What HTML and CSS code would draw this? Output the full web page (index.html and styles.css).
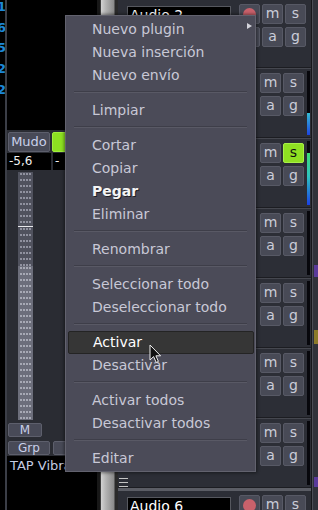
FILE: index.html
```html
<!DOCTYPE html>
<html lang="es">

<head>
    <meta charset="UTF-8">
    <title>Mezclador</title>
    <link rel="stylesheet" href="styles.css">
</head>

<body>
    <div class="screen">
        <div class="ruler">
            <div class="tick"><span>11</span></div>
            <div class="tick"><span>16</span></div>
            <div class="tick"><span>25</span></div>
            <div class="tick"><span>32</span></div>
            <div class="tick"><span>42</span></div>
        </div>

        <div class="strip">
            <div class="strip_top"></div>
            <div class="strip_row">
                <div class="sbtn sbtn_mute">Mudo</div>
                <div class="sbtn sbtn_solo">S</div>
            </div>
            <div class="strip_vals">
                <div class="val">-5,6</div>
                <div class="val">-</div>
            </div>
            <div class="fader_box">
                <div class="fader">
                    <div class="fader_part fader_up"><div class="dots"></div></div>
                    <div class="fader_mark"></div>
                    <div class="fader_part fader_mid"><div class="dots"></div></div>
                    <div class="fader_part fader_low"><div class="dots dots_light"></div></div>
                </div>
            </div>
            <div class="strip_row strip_row_m">
                <div class="sbtn sbtn_small sbtn_m">M</div>
            </div>
            <div class="strip_row strip_row_grp">
                <div class="sbtn sbtn_small sbtn_mute">Grp</div>
                <div class="sbtn sbtn_small sbtn_p">P</div>
            </div>
            <div class="plugins">TAP Vibrato</div>
        </div>

        <div class="split"></div>

        <div class="tracks">
            <div class="track track_first">
                <div class="track_main track_main_rec">
                    <div class="track_head">
                        <div class="name">Audio 2</div>
                        <div class="btns btns_rec">
                            <div class="btn rec"><span class="dot"></span></div>
                            <div class="btn">m</div>
                            <div class="btn">s</div>
                            <div class="btn">P</div>
                            <div class="btn">a</div>
                            <div class="btn">g</div>
                        </div>
                    </div>
                    <div class="handle"></div>
                </div>
            </div>

            <div class="track">
                <div class="track_main">
                    <div class="track_head">
                        <div class="btns">
                            <div class="btn">m</div>
                            <div class="btn">s</div>
                            <div class="btn">a</div>
                            <div class="btn">g</div>
                        </div>
                    </div>
                    <div class="handle"></div>
                </div>
                <div class="meter"><div class="meter_fill meter_blue" style="height:22px"></div></div>
            </div>

            <div class="track">
                <div class="track_main">
                    <div class="track_head">
                        <div class="btns">
                            <div class="btn">m</div>
                            <div class="btn btn_on">s</div>
                            <div class="btn">a</div>
                            <div class="btn">g</div>
                        </div>
                    </div>
                    <div class="handle"></div>
                </div>
                <div class="meter"><div class="meter_fill meter_green" style="height:52px"></div></div>
            </div>

            <div class="track">
                <div class="track_main">
                    <div class="track_head">
                        <div class="btns">
                            <div class="btn">m</div>
                            <div class="btn">s</div>
                            <div class="btn">a</div>
                            <div class="btn">g</div>
                        </div>
                    </div>
                    <div class="handle"></div>
                </div>
                <div class="meter"></div>
            </div>

            <div class="track">
                <div class="track_main">
                    <div class="track_head">
                        <div class="btns">
                            <div class="btn">m</div>
                            <div class="btn">s</div>
                            <div class="btn">a</div>
                            <div class="btn">g</div>
                        </div>
                    </div>
                    <div class="handle"></div>
                </div>
                <div class="meter"></div>
            </div>

            <div class="track">
                <div class="track_main">
                    <div class="track_head">
                        <div class="btns">
                            <div class="btn">m</div>
                            <div class="btn">s</div>
                            <div class="btn">a</div>
                            <div class="btn">g</div>
                        </div>
                    </div>
                    <div class="handle"></div>
                </div>
                <div class="meter"></div>
            </div>

            <div class="track">
                <div class="track_main">
                    <div class="track_head">
                        <div class="btns">
                            <div class="btn">m</div>
                            <div class="btn">s</div>
                            <div class="btn">a</div>
                            <div class="btn">g</div>
                        </div>
                    </div>
                    <div class="handle"></div>
                </div>
                <div class="meter"></div>
            </div>

            <div class="track track_last">
                <div class="track_main track_main_rec">
                    <div class="track_head">
                        <div class="name">Audio 6</div>
                        <div class="btns btns_rec">
                            <div class="btn rec"><span class="dot"></span></div>
                            <div class="btn">m</div>
                            <div class="btn">s</div>
                        </div>
                    </div>
                </div>
            </div>
        </div>

        <div class="edge">
            <div class="mark mark_purple"></div>
            <div class="mark mark_yellow"></div>
            <div class="mark mark_purple2"></div>
        </div>
    </div>

    <!-- menú contextual -->
    <div class="menu">
        <div class="item item_sub">Nuevo plugin<span class="arrow"></span></div>
        <div class="item">Nueva inserción</div>
        <div class="item">Nuevo envío</div>
        <div class="sep"></div>
        <div class="item">Limpiar</div>
        <div class="sep"></div>
        <div class="item">Cortar</div>
        <div class="item">Copiar</div>
        <div class="item item_bold">Pegar</div>
        <div class="item">Eliminar</div>
        <div class="sep"></div>
        <div class="item">Renombrar</div>
        <div class="sep"></div>
        <div class="item">Seleccionar todo</div>
        <div class="item">Deseleccionar todo</div>
        <div class="sep"></div>
        <div class="item item_on">Activar</div>
        <div class="item">Desactivar</div>
        <div class="sep"></div>
        <div class="item">Activar todos</div>
        <div class="item">Desactivar todos</div>
        <div class="sep"></div>
        <div class="item">Editar</div>
    </div>

    <svg class="cursor" width="13" height="20" viewBox="0 0 13 20">
        <path d="M1 1 L1 16 L4.6 12.6 L7.2 18.4 L9.4 17.4 L6.9 11.8 L11.6 11.8 Z" fill="#111" stroke="#eee" stroke-width="1" stroke-linejoin="round"/>
    </svg>
</body>

</html>
```

FILE: styles.css
```css
body {
    margin: 0;
    width: 318px;
    height: 510px;
    overflow: hidden;
    position: relative;
    background: #000;
    font-family: "DejaVu Sans", "Noto Sans", sans-serif;
}

.screen {
    display: flex;
    height: 510px;
}

/* regla de la izquierda */
.ruler {
    width: 5px;
    flex: none;
    overflow: hidden;
    background: #000;
    border-right: 2px solid #3b3e47;
}

.tick {
    display: flex;
    justify-content: flex-end;
    height: 20.7px;
    line-height: 20.7px;
    margin-right: -1px;
    font-size: 13px;
    font-weight: bold;
    color: #1c88d8;
}

.tick:first-child {
    margin-top: -3px;
}

/* tira del mezclador */
.strip {
    width: 90px;
    flex: none;
    display: flex;
    flex-direction: column;
    background: #2a2c33;
}

.strip_top {
    height: 130px;
    background: #000;
}

.strip_row {
    display: flex;
    gap: 2px;
    padding: 2px 0 0 1px;
}

.sbtn {
    height: 20px;
    box-sizing: border-box;
    background: #484a57;
    border: 1px solid #5d5f6c;
    border-radius: 2px;
    color: #c9d0ea;
    font-size: 13px;
    line-height: 18px;
    text-align: center;
}

.sbtn_mute {
    width: 42px;
}

.sbtn_solo {
    width: 40px;
    background: #8de021;
    border-color: #a2ee3e;
    color: #111;
}

.sbtn_small {
    height: 14px;
    font-size: 12px;
    line-height: 12px;
}

.sbtn_m {
    width: 34px;
}

.sbtn_p {
    width: 40px;
    margin-left: 1px;
}

.strip_row_grp {
    padding-top: 4px;
}

.strip_vals {
    display: flex;
    gap: 2px;
    height: 17px;
    margin-top: 1px;
}

.val {
    width: 44px;
    box-sizing: border-box;
    padding-left: 2px;
    background: #000;
    color: #f2f2f2;
    font-size: 12px;
    line-height: 17px;
}

.fader_box {
    height: 251px;
    box-sizing: border-box;
    padding: 2px 0 1px 11px;
}

.fader {
    width: 15px;
    height: 100%;
    display: flex;
    flex-direction: column;
}

.fader_part {
    display: flex;
    justify-content: center;
}

.fader_up {
    height: 54px;
    background: #50525e;
}

.fader_mark {
    height: 1px;
    background: #e8e8ec;
}

.fader_mid {
    height: 39px;
    background: #50525e;
}

.fader_low {
    flex: 1;
    background: #6c6e7b;
}

.dots {
    width: 11px;
    background-image: radial-gradient(circle at 1px 2px, #9294a2 0.7px, transparent 0.9px);
    background-size: 3px 6px;
}

.dots_light {
    background-image: radial-gradient(circle at 1px 2px, #a9abb7 0.7px, transparent 0.9px);
}

.plugins {
    flex: 1;
    margin-top: 1px;
    padding: 2px 0 0 3px;
    background: #000;
    color: #c3cbe0;
    font-size: 13px;
    line-height: 16px;
    white-space: nowrap;
    overflow: hidden;
}

/* separador */
.split {
    width: 21px;
    flex: none;
    background: linear-gradient(to right, #181818 0 3px, #3c3c3c 3px 4px, #d2d2d2 4px, #b2b2b2 9px, #8a8a8a 17px, #2a2a2a 18px);
}

/* pistas */
.tracks {
    width: 193px;
    flex: none;
    display: flex;
    flex-direction: column;
    background: #2c2e36;
}

.track {
    height: 70px;
    flex: none;
    box-sizing: border-box;
    display: flex;
    border-top: 1px solid #45474f;
    border-bottom: 1px solid #1c1d22;
}

.track_first {
    height: 68px;
    border-top: 0;
}

.track_last {
    flex: 1;
    border-top: 3px solid #5b5d65;
    border-bottom: 0;
}

.track_main {
    flex: 1;
    display: flex;
    flex-direction: column;
    padding-top: 4px;
}

.track_main_rec {
    padding-right: 5px;
}

.track_head {
    display: flex;
    align-items: flex-start;
}

.name {
    width: 104px;
    height: 20px;
    box-sizing: border-box;
    margin: 2px 0 0 9px;
    padding-left: 2px;
    background: #000;
    border: 1px solid #56585f;
    color: #fff;
    font-size: 14px;
    line-height: 16px;
}

.btns {
    margin-left: auto;
    display: grid;
    grid-template-columns: repeat(2, 21px);
    grid-auto-rows: 20px;
    gap: 3px 2px;
}

.btns_rec {
    grid-template-columns: repeat(3, 21px);
}

.btn {
    box-sizing: border-box;
    background: #484a56;
    border: 1px solid #575965;
    border-radius: 2px;
    color: #cbcdd9;
    font-size: 14px;
    line-height: 17px;
    text-align: center;
}

.btn_on {
    background: #8fe022;
    border-color: #a8f048;
    color: #101010;
}

.rec {
    display: flex;
    align-items: center;
    justify-content: center;
}

.dot {
    width: 13px;
    height: 13px;
    border-radius: 50%;
    background: #c9616b;
}

.handle {
    width: 9px;
    height: 9px;
    margin: auto 0 0 1px;
    background: repeating-linear-gradient(#c4c4c4 0 1px, transparent 1px 4px);
}

.meter {
    width: 3px;
    margin: 2px 1px 2px 3px;
    display: flex;
    flex-direction: column;
    justify-content: flex-end;
    background: #07070c;
}

.meter_blue {
    background: linear-gradient(#36bcd2, #1c44e2);
}

.meter_green {
    background: linear-gradient(#3ade74, #2ec4c0 45%, #1a40e6);
}

/* columna derecha */
.edge {
    flex: 1;
    display: flex;
    flex-direction: column;
    background: #30323a;
    border-left: 1px solid #16171b;
    box-shadow: inset 1px 0 #4b4d56;
}

.mark {
    margin-left: 2px;
}

.mark_purple {
    margin-top: 265px;
    height: 12px;
    background: #5a3a9a;
}

.mark_yellow {
    margin-top: 53px;
    height: 14px;
    background: #8c7a2a;
}

.mark_purple2 {
    margin-top: 133px;
    height: 10px;
    background: #5a3a9a;
}

/* menú */
.menu {
    position: absolute;
    left: 65px;
    top: 15px;
    width: 191px;
    box-sizing: border-box;
    padding: 2px 0 1px;
    background: #4b4b58;
    border: 1px solid #62626e;
    box-shadow: 0 0 3px 1px rgba(0, 0, 0, 0.45);
}

.item {
    height: 23px;
    box-sizing: border-box;
    padding-left: 26px;
    color: #c8c8d6;
    font-size: 14px;
    line-height: 23px;
    white-space: nowrap;
}

.item_sub {
    display: flex;
    justify-content: space-between;
}

.arrow {
    width: 0;
    height: 0;
    margin: 5px 3px 0 0;
    border-left: 5px solid #d4d4dc;
    border-top: 3.5px solid transparent;
    border-bottom: 3.5px solid transparent;
}

.item_bold {
    font-weight: bold;
    color: #f4f4f4;
    text-shadow: 1px 1px 0 #1e1e24;
}

.item_on {
    margin: 0 1px 0 2px;
    padding-left: 24px;
    background: #363636;
    border: 1px solid #242424;
    border-radius: 2px;
    color: #fff;
    line-height: 21px;
}

.sep {
    height: 1px;
    margin: 4px 8px 6px;
    border-top: 1px solid #3e3e49;
    background: #595965;
}

.cursor {
    position: absolute;
    left: 149px;
    top: 344px;
}
```
